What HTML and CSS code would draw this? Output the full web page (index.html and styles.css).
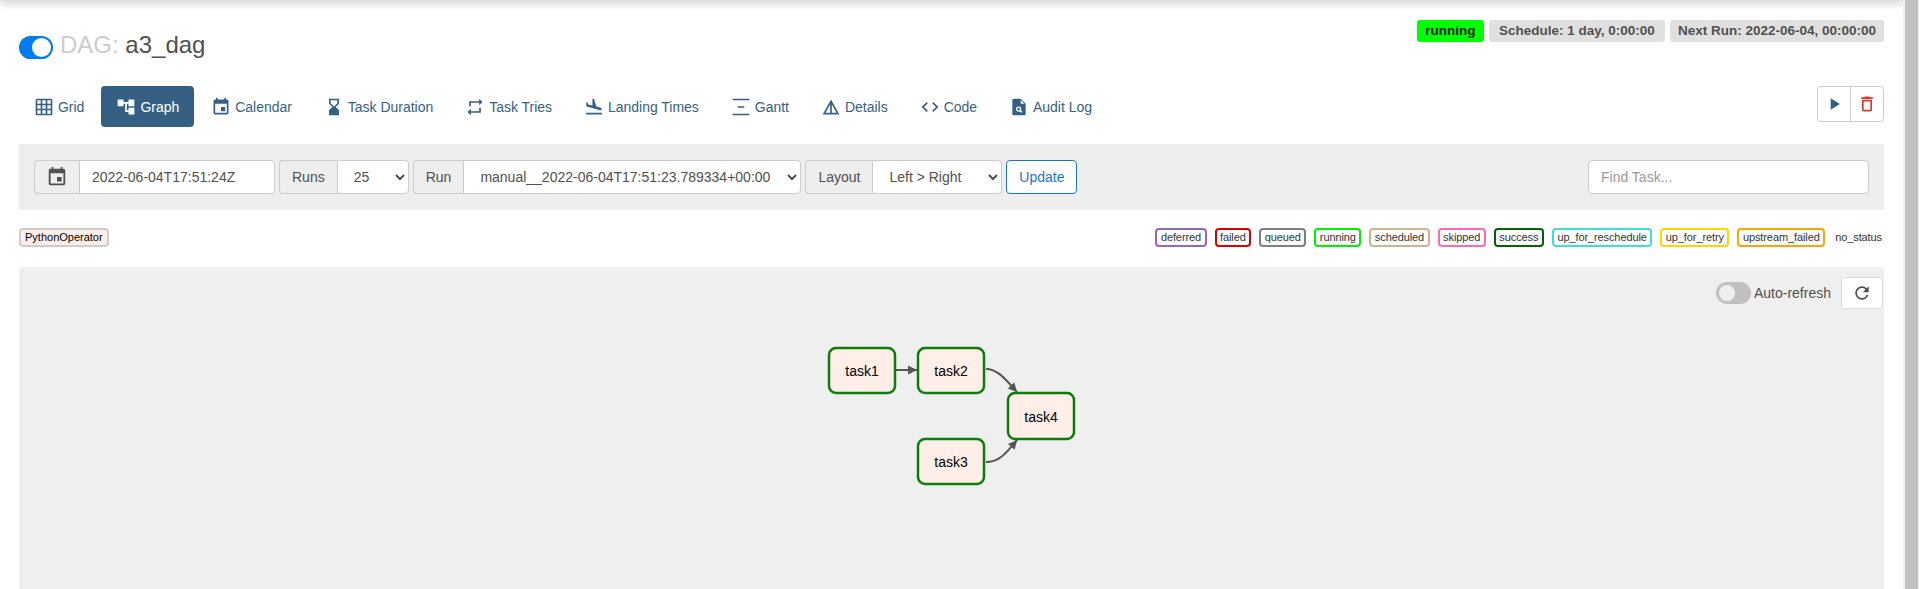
FILE: index.html
```html
<!DOCTYPE html>
<html lang="en">
<head>
    <meta charset="UTF-8">
    <meta name="viewport" content="width=device-width, initial-scale=1.0">
    <title>a3_dag - Graph</title>
    <link rel="stylesheet" href="styles.css">
</head>
<body>
    <div class="page">
        <div class="topbar"></div>

        <main class="content">
            <div class="dag-header">
                <h4 class="dag-title">
                    <span class="switch"><span class="switch-knob"></span></span>
                    <span class="dag-name"><span class="dag-prefix">DAG:</span> a3_dag</span>
                </h4>
                <div class="dag-labels">
                    <span class="label label-running">running</span>
                    <span class="label label-schedule">Schedule: 1 day, 0:00:00</span>
                    <span class="label">Next Run: 2022-06-04, 00:00:00</span>
                </div>
            </div>

            <div class="nav-row">
                <ul class="nav">
                    <li><a href="#"><svg class="icon" viewBox="0 0 24 24"><path d="M20 2H4c-1.1 0-2 .9-2 2v16c0 1.1.9 2 2 2h16c1.1 0 2-.9 2-2V4c0-1.1-.9-2-2-2zM8 20H4v-4h4v4zm0-6H4v-4h4v4zm0-6H4V4h4v4zm6 12h-4v-4h4v4zm0-6h-4v-4h4v4zm0-6h-4V4h4v4zm6 12h-4v-4h4v4zm0-6h-4v-4h4v4zm0-6h-4V4h4v4z"/></svg>Grid</a></li>
                    <li class="active"><a href="#"><svg class="icon" viewBox="0 0 24 24"><path d="M22 11V3h-7v3H9V3H2v8h7V8h2v10h4v3h7v-8h-7v3h-2V8h2v3z"/></svg>Graph</a></li>
                    <li><a href="#"><svg class="icon" viewBox="0 0 24 24"><path d="M17 12h-5v5h5v-5zM16 1v2H8V1H6v2H5c-1.11 0-1.99.9-1.99 2L3 19c0 1.1.89 2 2 2h14c1.1 0 2-.9 2-2V5c0-1.1-.9-2-2-2h-1V1h-2zm3 18H5V8h14v11z"/></svg>Calendar</a></li>
                    <li><a href="#"><svg class="icon" viewBox="0 0 24 24"><path d="M18 22l-.01-6L14 12l3.99-4.01L18 2H6v6l4 4-4 3.99V22h12zM8 7.5V4h8v3.5l-4 4-4-4z"/></svg>Task Duration</a></li>
                    <li><a href="#"><svg class="icon" viewBox="0 0 24 24"><path d="M7 7h10v3l4-4-4-4v3H5v6h2V7zm10 10H7v-3l-4 4 4 4v-3h12v-6h-2v4z"/></svg>Task Tries</a></li>
                    <li><a href="#"><svg class="icon" viewBox="0 0 24 24"><path d="M2.5 19h19v2h-19v-2zm7.18-5.73l4.35 1.16 5.31 1.42c.8.21 1.62-.26 1.84-1.06.21-.8-.26-1.62-1.06-1.84l-5.31-1.42-2.76-9.02L10.12 2v8.28L5.15 8.95l-.93-2.32-1.45-.39v5.17l1.6.43 5.31 1.43z"/></svg>Landing Times</a></li>
                    <li><a href="#"><svg class="icon" viewBox="0 0 24 24"><path d="M2 22v-2h20v2H2zM2 4V2h20v2H2zm6 9v-2h8v2H8z"/></svg>Gantt</a></li>
                    <li><a href="#"><svg class="icon" viewBox="0 0 24 24"><path d="M12 3L2 21h20L12 3zm1 5.92L18.6 19H13V8.92zm-2 0V19H5.4L11 8.92z"/></svg>Details</a></li>
                    <li><a href="#"><svg class="icon" viewBox="0 0 24 24"><path d="M9.4 16.6L4.8 12l4.6-4.6L8 6l-6 6 6 6 1.4-1.4zm5.2 0l4.6-4.6-4.6-4.6L16 6l6 6-6 6-1.4-1.4z"/></svg>Code</a></li>
                    <li><a href="#"><svg class="icon" viewBox="0 0 24 24"><path d="M14 2H6c-1.1 0-2 .9-2 2v16c0 1.1.9 2 2 2h12c1.1 0 2-.9 2-2V8l-6-6z"/><path class="icon-fold" d="M14 3.5V8h4.5z"/><circle class="icon-lens" cx="11.5" cy="14.5" r="2.4"/><path class="icon-handle" d="M13.4 16.4l2 2"/></svg>Audit Log</a></li>
                </ul>
                <div class="btn-group">
                    <button class="btn-icon" type="button"><svg class="icon" viewBox="0 0 24 24"><path d="M8 5v14l11-7z"/></svg></button>
                    <button class="btn-icon btn-delete" type="button"><svg class="icon" viewBox="0 0 24 24"><path d="M6 19c0 1.1.9 2 2 2h8c1.1 0 2-.9 2-2V7H6v12zM8 9h8v10H8V9zm7.5-5l-1-1h-5l-1 1H5v2h14V4z"/></svg></button>
                </div>
            </div>

            <form class="toolbar">
                <div class="input-group">
                    <span class="addon addon-cal"><svg class="icon" viewBox="0 0 24 24"><path d="M17 12h-5v5h5v-5zM16 1v2H8V1H6v2H5c-1.11 0-1.99.9-1.99 2L3 19c0 1.1.89 2 2 2h14c1.1 0 2-.9 2-2V5c0-1.1-.9-2-2-2h-1V1h-2zm3 18H5V8h14v11z"/></svg></span>
                    <input class="field field-date" type="text" value="2022-06-04T17:51:24Z">
                </div>
                <div class="input-group">
                    <span class="addon">Runs</span>
                    <select class="field field-runs"><option>25</option></select>
                </div>
                <div class="input-group">
                    <span class="addon">Run</span>
                    <select class="field field-run"><option>manual__2022-06-04T17:51:23.789334+00:00</option></select>
                </div>
                <div class="input-group">
                    <span class="addon">Layout</span>
                    <select class="field field-layout"><option>Left &gt; Right</option></select>
                </div>
                <button class="btn-update" type="button">Update</button>
                <input class="find-task" type="text" placeholder="Find Task...">
            </form>

            <div class="legend">
                <span class="legend-item legend-op">PythonOperator</span>
                <div class="legend-states">
                    <span class="legend-item state-deferred">deferred</span>
                    <span class="legend-item state-failed">failed</span>
                    <span class="legend-item state-queued">queued</span>
                    <span class="legend-item state-running">running</span>
                    <span class="legend-item state-scheduled">scheduled</span>
                    <span class="legend-item state-skipped">skipped</span>
                    <span class="legend-item state-success">success</span>
                    <span class="legend-item state-reschedule">up_for_reschedule</span>
                    <span class="legend-item state-retry">up_for_retry</span>
                    <span class="legend-item state-upstream">upstream_failed</span>
                    <span class="legend-item state-none">no_status</span>
                </div>
            </div>

            <section class="graph-panel">
                <div class="refresh-row">
                    <span class="switch switch-off"><span class="switch-knob"></span></span>
                    <span class="refresh-label">Auto-refresh</span>
                    <button class="btn-refresh" type="button"><svg class="icon" viewBox="0 0 24 24"><path d="M17.65 6.35C16.2 4.9 14.21 4 12 4c-4.42 0-7.99 3.58-7.99 8s3.57 8 7.99 8c3.73 0 6.84-2.55 7.73-6h-2.08c-.82 2.33-3.04 4-5.65 4-3.31 0-6-2.69-6-6s2.69-6 6-6c1.66 0 3.14.69 4.22 1.78L13 11h7V4l-2.35 2.35z"/></svg></button>
                </div>

                <svg class="graph" viewBox="0 0 1865 322">
                    <defs>
                        <marker id="arrow" markerUnits="userSpaceOnUse" markerWidth="10" markerHeight="10" refX="9" refY="5" orient="auto">
                            <path d="M0 0.5L9 5L0 9.5z" fill="#555"/>
                        </marker>
                    </defs>
                    <path class="edge" marker-end="url(#arrow)" d="M877 103L898 103"/>
                    <path class="edge" marker-end="url(#arrow)" d="M967 102C979 102 987 113 998 125"/>
                    <path class="edge" marker-end="url(#arrow)" d="M967 195C981 195 988 185 998 173"/>

                    <rect class="node" x="810" y="81" width="66" height="45" rx="7"/>
                    <text class="node-text" x="843" y="109">task1</text>
                    <rect class="node" x="899" y="81" width="66" height="45" rx="7"/>
                    <text class="node-text" x="932" y="109">task2</text>
                    <rect class="node" x="899" y="172" width="66" height="45" rx="7"/>
                    <text class="node-text" x="932" y="200">task3</text>
                    <rect class="node" x="989" y="126" width="66" height="46" rx="7"/>
                    <text class="node-text" x="1022" y="155">task4</text>
                </svg>
            </section>
        </main>
    </div>

    <div class="scrollbar"><div class="scrollbar-thumb"></div></div>
</body>
</html>
```

FILE: styles.css
```css
/* General Reset */
html, body {
    margin: 0;
    padding: 0;
    height: 100%;
    overflow: hidden;
}

body {
    display: flex;
    font-family: 'Liberation Sans', Arial, sans-serif;
    font-size: 14px;
    color: #51504f;
    background: #fff;
}

.page {
    flex: 1;
    min-width: 0;
    display: flex;
    flex-direction: column;
}

/* Most of the bar sits above the window, only its shadow shows */
.topbar {
    height: 21px;
    margin-top: -20px;
    flex-shrink: 0;
    background: #dedede;
    box-shadow: 0 2px 10px rgba(0, 0, 0, 0.2);
}

.content {
    flex: 1;
    min-height: 0;
    display: flex;
    flex-direction: column;
    padding: 0 19px;
}

/* Fake window scrollbar */
.scrollbar {
    position: relative;
    width: 16px;
    flex-shrink: 0;
    background: #f1f1f1;
    padding: 0 1px 0 2px;
    box-sizing: border-box;
}

.scrollbar-thumb {
    height: 100%;
    background: #c1c1c1;
}

/* Header */
.dag-header {
    display: flex;
    justify-content: space-between;
    align-items: flex-start;
    height: 85px;
    padding-top: 19px;
    box-sizing: border-box;
}

.dag-title {
    display: flex;
    align-items: center;
    gap: 6px;
    margin: 13px 0 0;
    font-size: 24px;
    font-weight: normal;
    line-height: 24px;
}

.dag-name {
    padding-bottom: 4px;
}

.dag-prefix {
    color: #ccc;
}

.switch {
    position: relative;
    display: inline-block;
    width: 34px;
    height: 23px;
    border-radius: 12px;
    background: #017cee;
    margin-right: 1px;
}

.switch-knob {
    position: absolute;
    top: 2px;
    right: 2px;
    width: 19px;
    height: 19px;
    border-radius: 50%;
    background: #fff;
}

.switch-off {
    background: #c0c0c0;
    height: 22px;
    width: 35px;
    margin: 0;
}

.switch-off .switch-knob {
    right: auto;
    left: 3px;
    width: 16px;
    height: 16px;
    top: 3px;
    background: #eee;
}

.dag-labels {
    display: flex;
    gap: 5px;
}

.label {
    padding: 0 8px;
    height: 22px;
    line-height: 22px;
    border-radius: 3px;
    background: #e0e0e0;
    font-size: 13.5px;
    font-weight: bold;
}

.label-schedule {
    padding: 0 10px;
}

.label-running {
    padding: 0 8.5px;
    background: #00ff00;
    color: #222;
}

/* Nav pills */
.nav-row {
    display: flex;
    justify-content: space-between;
    align-items: flex-start;
    height: 58px;
}

.nav {
    display: flex;
    gap: 2px;
    list-style: none;
    margin: 0;
    padding: 0;
}

.nav a {
    display: flex;
    align-items: center;
    height: 41px;
    padding: 0 15px;
    border-radius: 4px;
    color: #365f84;
    letter-spacing: -0.02px;
    text-decoration: none;
}

.nav .icon {
    margin-right: 4px;
}

.nav .active a {
    background: #365f84;
    color: #fff;
}

.icon {
    width: 20px;
    height: 20px;
    flex-shrink: 0;
    fill: currentColor;
}

.icon-fold {
    fill: #fff;
}

.icon-lens {
    fill: #365f84;
    stroke: #fff;
    stroke-width: 1.6;
}

.icon-handle {
    fill: none;
    stroke: #fff;
    stroke-width: 1.8;
}

.btn-group {
    display: flex;
    height: 36px;
    border: 1px solid #ccc;
    border-radius: 4px;
    box-sizing: border-box;
    width: 67px;
}

.btn-icon {
    flex: 1;
    display: flex;
    align-items: center;
    justify-content: center;
    padding: 0;
    border: none;
    background: #fff;
    border-radius: 4px;
    color: #365f84;
}

.btn-delete {
    border-left: 1px solid #ccc;
    border-radius: 0 4px 4px 0;
    color: #d9382c;
}

/* Toolbar */
.toolbar {
    display: flex;
    align-items: center;
    gap: 4px;
    height: 66px;
    padding: 0 15px;
    box-sizing: border-box;
    flex-shrink: 0;
    background: #eee;
}

.input-group {
    display: flex;
    height: 34px;
}

.addon {
    display: flex;
    align-items: center;
    padding: 0 12px;
    background: #eee;
    border: 1px solid #ccc;
    border-right: none;
    border-radius: 4px 0 0 4px;
}

.addon-cal {
    padding: 0;
    width: 45px;
    justify-content: center;
    box-sizing: border-box;
}

.addon-cal .icon {
    width: 22px;
    height: 22px;
}

.field {
    height: 34px;
    padding: 6px 12px;
    border: 1px solid #ccc;
    border-radius: 0 4px 4px 0;
    background: #fff;
    color: #51504f;
    font-family: inherit;
    font-size: 14px;
    box-sizing: border-box;
}

.field-date { width: 196px; }
.field-runs { width: 72px; }
.field-run { width: 338px; }
.field-layout { width: 130px; }

.btn-update {
    width: 71px;
    height: 34px;
    padding: 0;
    border: 1px solid #1b76c8;
    border-radius: 4px;
    background: #fff;
    color: #1b76c8;
    font-family: inherit;
    font-size: 14px;
}

.find-task {
    width: 281px;
    height: 34px;
    margin-left: auto;
    padding: 6px 12px;
    border: 1px solid #ccc;
    border-radius: 4px;
    background: #fff;
    font-family: inherit;
    font-size: 14px;
    box-sizing: border-box;
}

.find-task::placeholder {
    color: #999;
}

/* Legend */
.legend {
    display: flex;
    justify-content: space-between;
    align-items: flex-start;
    height: 57px;
    padding-top: 18px;
    box-sizing: border-box;
    flex-shrink: 0;
}

.legend-states {
    display: flex;
    align-items: center;
    gap: 8px;
}

.legend-item {
    padding: 0 3.5px;
    height: 19px;
    line-height: 15px;
    border: 2px solid #000;
    border-radius: 4px;
    box-sizing: border-box;
    background: #fff;
    color: #333;
    font-size: 11px;
    letter-spacing: -0.1px;
}

.legend-op {
    padding: 0 4px;
    background: #ffefeb;
    border-color: #ccc;
    color: #000;
    letter-spacing: 0;
}

.state-deferred { border-color: #9467bd; }
.state-failed { border-color: #d80000; }
.state-queued { border-color: #808080; }
.state-running { border-color: #00f000; }
.state-scheduled { border-color: #d2b48c; }
.state-skipped { border-color: #ff69b4; }
.state-success { border-color: #006400; }
.state-reschedule { border-color: #40e0d0; }
.state-retry { border-color: #ffd700; }
.state-upstream { border-color: #ffa500; }

.state-none {
    border-color: transparent;
    background: none;
    padding: 0;
}

/* Graph */
.graph-panel {
    position: relative;
    flex: 1;
    min-height: 0;
    overflow: hidden;
    background: #efefef;
    border-radius: 4px 4px 0 0;
}

.refresh-row {
    position: relative;
    z-index: 1;
    display: flex;
    justify-content: flex-end;
    align-items: center;
    padding: 10px 1px 0 0;
}

.refresh-label {
    margin: 0 10px 0 3px;
}

.btn-refresh {
    width: 42px;
    height: 32px;
    display: flex;
    align-items: center;
    justify-content: center;
    padding: 0;
    border: 1px solid #ddd;
    border-radius: 2px;
    background: #fff;
    color: #51504f;
}

.graph {
    position: absolute;
    top: 0;
    left: 0;
    width: 1865px;
    height: 322px;
}

.edge {
    fill: none;
    stroke: #555;
    stroke-width: 2;
}

.node {
    fill: #ffefe8;
    stroke: #0a7d0a;
    stroke-width: 2.5;
}

.node-text {
    fill: #000;
    font-size: 14px;
    text-anchor: middle;
}
```
